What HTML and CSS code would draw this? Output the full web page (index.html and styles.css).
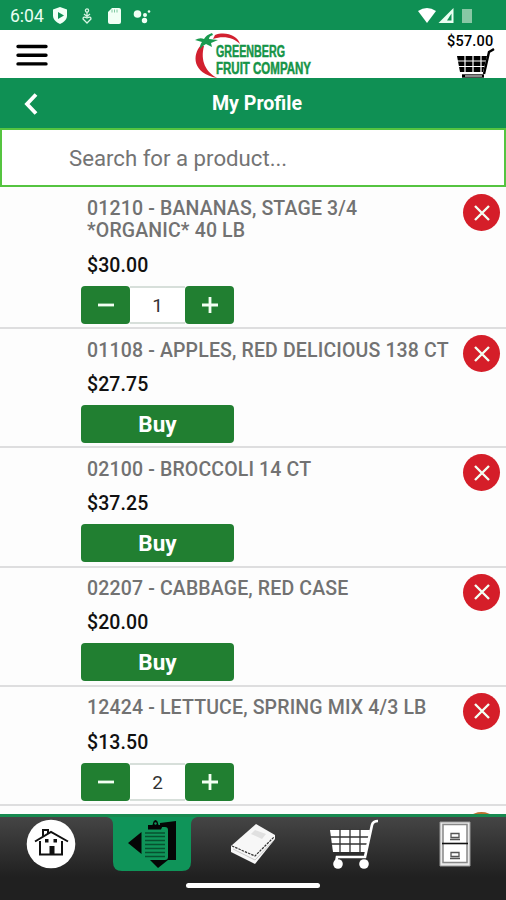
FILE: index.html
```
<!DOCTYPE html>
<html lang="en">
<head>
    <meta charset="UTF-8">
    <meta name="viewport" content="width=device-width, initial-scale=1.0">
    <title>My Profile</title>
    <link rel="stylesheet" href="styles.css">
</head>
<body>
    <!-- Status bar -->
    <div class="status">
        <span class="clock">6:04</span>
        <svg class="status-left" width="106" height="20" viewBox="0 0 106 20" fill="#f1fff5">
            <path d="M7 1l7 2.500v6c0 4-3 6.500-7 8.500-4-2-7-4.500-7-8.500v-6z"/>
            <path d="M5 6l6 3.500-6 3.500z" fill="#0f9054"/>
            <g fill="none" stroke="#d8f5e3" stroke-width="1.300">
                <circle cx="34" cy="4.500" r="1.600"/>
                <path d="M34 6v4M31 8l3 2.500 3-2.500M34 17l-4-4q0-3 4-1 4-2 4 1z"/>
            </g>
            <path d="M59 2h7q2 0 2 2v12q0 2-2 2H57q-2 0-2-2V6z"/>
            <path d="M59 3.500v3M61.500 3.500v3M64 3.500v3" stroke="#7fc7a0"/>
            <circle cx="84.500" cy="8" r="3.800"/>
            <circle cx="92" cy="9" r="2"/>
            <circle cx="91.500" cy="14.500" r="2.700"/>
            <circle cx="96" cy="5.500" r="1.300"/>
        </svg>
        <svg class="status-right" width="55" height="18" viewBox="0 0 55 18">
            <path d="M0 4q9-6 18 0l-9 12z" fill="#fff"/>
            <path d="M20.500 16L35.500 1v15z" fill="#eafff2"/>
            <path d="M29 13.500l4.500-7v7z" fill="#0f9054"/>
            <path d="M44 2h10v14H44z" fill="#88c8a5"/>
        </svg>
    </div>

    <!-- Header -->
    <header class="header">
        <svg class="menu" width="32" height="23" viewBox="0 0 32 23">
            <path d="M2 2.500h28M2 11.200h28M2 19.900h28" stroke="#000" stroke-width="3.400" stroke-linecap="round"/>
        </svg>
        <svg class="logo" width="120" height="48" viewBox="0 0 120 48">
            <path d="M11 14C2 24 2 42 27 47C16 41 10 30 14 15z" fill="#d2202f"/>
            <path d="M25 4C36 0 48 5 50 13C44 7 34 4 23 8z" fill="#d2202f"/>
            <path d="M5 9q5-3 9-1q2-4 8-6l1 2q-4 1-4 4l9 1-7 3 1 4-6-3q-4 2-6 5 0-5 2-7z" fill="#1a9a4f"/>
            <text x="26" y="25.500" textLength="69" lengthAdjust="spacingAndGlyphs">GREENBERG</text>
            <text x="26" y="42.500" textLength="95" lengthAdjust="spacingAndGlyphs">FRUIT COMPANY</text>
        </svg>
        <div class="cart">
            <span class="total">$57.00</span>
            <svg width="40" height="31" viewBox="0 0 40 31">
                <path d="M1 9h30l-4 16H4z" fill="#000"/>
                <path d="M1 14h29M2 19.500h27M9 8v17M17 8v17M25 8v17" stroke="#fff" stroke-width="1.200"/>
                <path d="M38 2l-5 3-5 22" fill="none" stroke="#000" stroke-width="2.400"/>
                <path d="M6 29h22" stroke="#000" stroke-width="3.400"/>
                <path d="M9 29h17" stroke="#999" stroke-width="1.800"/>
            </svg>
        </div>
    </header>

    <div class="title-bar">
        <svg class="back" width="14" height="22" viewBox="0 0 14 22">
            <path d="M12 1.500L3 11l9 9.500" fill="none" stroke="#fff" stroke-width="3.800"/>
        </svg>
        <h1>My Profile</h1>
    </div>

    <input class="search" type="text" placeholder="Search for a product...">

    <!-- Products -->
    <main class="list">
        <div class="item tall">
            <div class="name">01210 - BANANAS, STAGE 3/4 *ORGANIC* 40 LB</div>
            <div class="price">$30.00</div>
            <div class="qty">
                <button class="step"><svg width="16" height="16"><path d="M0 8h16"/></svg></button>
                <span class="count">1</span>
                <button class="step"><svg width="16" height="16"><path d="M0 8h16M8 0v16"/></svg></button>
            </div>
            <button class="remove"><svg width="16" height="16"><path d="M1 1l14 14M15 1L1 15"/></svg></button>
        </div>
        <div class="item">
            <div class="name">01108 - APPLES, RED DELICIOUS 138 CT</div>
            <div class="price">$27.75</div>
            <button class="buy">Buy</button>
            <button class="remove"><svg width="16" height="16"><path d="M1 1l14 14M15 1L1 15"/></svg></button>
        </div>
        <div class="item">
            <div class="name">02100 - BROCCOLI 14 CT</div>
            <div class="price">$37.25</div>
            <button class="buy">Buy</button>
            <button class="remove"><svg width="16" height="16"><path d="M1 1l14 14M15 1L1 15"/></svg></button>
        </div>
        <div class="item">
            <div class="name">02207 - CABBAGE, RED CASE</div>
            <div class="price">$20.00</div>
            <button class="buy">Buy</button>
            <button class="remove"><svg width="16" height="16"><path d="M1 1l14 14M15 1L1 15"/></svg></button>
        </div>
        <div class="item">
            <div class="name">12424 - LETTUCE, SPRING MIX 4/3 LB</div>
            <div class="price">$13.50</div>
            <div class="qty">
                <button class="step"><svg width="16" height="16"><path d="M0 8h16"/></svg></button>
                <span class="count">2</span>
                <button class="step"><svg width="16" height="16"><path d="M0 8h16M8 0v16"/></svg></button>
            </div>
            <button class="remove"><svg width="16" height="16"><path d="M1 1l14 14M15 1L1 15"/></svg></button>
        </div>
        <div class="item">
            <button class="remove pending"></button>
        </div>
    </main>

    <!-- Bottom navigation -->
    <nav class="nav">
        <div class="tabs">
            <a class="tab">
                <svg width="50" height="50" viewBox="0 0 50 50">
                    <circle cx="25" cy="25" r="24.300" fill="#fff"/>
                    <path d="M9 22.500L25 13l17 9.500M14 22v13.500h22V22M17 17v-6h5v3" fill="none" stroke="#111" stroke-width="2"/>
                    <path d="M19 20h3.500v3.500H19zM27.500 20H31v3.500h-3.500zM23.500 27h5v8h-5z" fill="#111"/>
                </svg>
            </a>
            <a class="tab active">
                <svg class="tab-bg" width="90" height="54" viewBox="0 0 90 54">
                    <path d="M0 0q6 1 6 8v37q0 9 9 9h60q9 0 9-9V8q0-7 6-8z" fill="#0f9459"/>
                </svg>
                <svg class="tab-icon" width="50" height="50" viewBox="0 0 50 50">
                    <path d="M1 24L14.500 13v22zM33 4l16-2v39h-8l-10 8-8-8h15q3 0 3-3V11q0-3-3-3h-5z" fill="#050505"/>
                    <path d="M18 14h20M18 17.500h20M18 21.500h20M18 25.500h20M18 29.500h20M18 33.500h20M18 37.500h20" stroke="#07512f" stroke-width="1.500"/>
                    <path d="M21 10.500V6h4.500l1-3.500q2-3 4 0l1 3.500H36l-2 4.500z" fill="#050505"/>
                    <circle cx="28.500" cy="4.500" r="1.200" fill="#0f9459"/>
                </svg>
            </a>
            <a class="tab">
                <svg width="46" height="42" viewBox="0 0 46 42">
                    <path d="M26 1l19 11v4L25 41 1 29v-6z" fill="#f7f7f7"/>
                    <path d="M2 23l23 10 19-19" fill="none" stroke="#333" stroke-width="1.200" stroke-dasharray="2.500 1"/>
                    <path d="M3 26l22 11 19-20" fill="none" stroke="#ccc"/>
                    <path d="M21 11l4-4 11 4-4 5z" fill="#e0e0e0"/>
                </svg>
            </a>
            <a class="tab">
                <svg width="50" height="50" viewBox="0 0 50 50">
                    <path d="M1 11h40l-4 22H4z" fill="#fff"/>
                    <path d="M1 18h40M2 25h38M11 10v23M21 10v23M31 10v23" stroke="#333" stroke-width="1.300"/>
                    <path d="M49 2q-5 0-6 4l-7 32H8l-1 6" fill="none" stroke="#fff" stroke-width="2.700"/>
                    <circle cx="9" cy="45" r="4.800" fill="#fff"/>
                    <circle cx="35" cy="45" r="4.800" fill="#fff"/>
                </svg>
            </a>
            <a class="tab">
                <svg width="32" height="46" viewBox="0 0 32 46">
                    <path d="M1 1h30v44H1z" fill="#e9e9e9" stroke="#999"/>
                    <path d="M4 3.500h24v38H4z" fill="#fff" stroke="#888" stroke-width="1.500"/>
                    <path d="M3 22.500h26" stroke="#111" stroke-width="1.600"/>
                    <path d="M12 12.500h8v4h-8zM11 18.500h10M12 31.500h8v4h-8zM11 37.500h10" fill="none" stroke="#555" stroke-width="1.300"/>
                </svg>
            </a>
        </div>
        <div class="home-bar"></div>
    </nav>
</body>
</html>
```
FILE: styles.css
```
* {
    box-sizing: border-box;
}

body {
    margin: 0;
    height: 900px;
    display: flex;
    flex-direction: column;
    overflow: hidden;
    font-family: Roboto, sans-serif;
    background-color: #fdfdfd;
}

button {
    border: none;
    padding: 0;
    font-family: inherit;
    cursor: pointer;
}

svg {
    display: block;
}

.status {
    height: 30px;
    flex: none;
    display: flex;
    align-items: center;
    padding: 1px 33px 0 10px;
    background-color: #0f9054;
}

.clock {
    width: 43px;
    font-size: 17.5px;
    color: #e9fff2;
}

.status-right {
    margin-left: auto;
}

.header {
    height: 48px;
    flex: none;
    display: flex;
    align-items: flex-start;
    background-color: #fff;
}

.menu {
    margin: 14px 0 0 16px;
}

.logo {
    margin: 1px 0 0 142px;
    overflow: visible;
    font-family: "Liberation Sans Narrow", "Liberation Sans", sans-serif;
    font-size: 16px;
    font-weight: bold;
    fill: #159447;
}

.logo text {
    stroke: #159447;
    stroke-width: 0.5px;
}

.cart {
    margin-left: auto;
    width: 59px;
    padding-top: 3px;
}

.cart svg {
    margin: -3px 0 0 9px;
}

.total {
    display: block;
    font-size: 14.5px;
    line-height: 17px;
    font-weight: 500;
    letter-spacing: 0.2px;
}

.title-bar {
    height: 51px;
    flex: none;
    display: flex;
    align-items: center;
    padding: 0 30px 0 24px;
    background-color: #0f9054;
}

.title-bar h1 {
    flex: 1;
    margin: 0;
    text-align: center;
    color: #fff;
    font-size: 19.6px;
    font-weight: 700;
}

.search {
    height: 59px;
    flex: none;
    margin-top: -1px;
    padding: 1px 0 0 67px;
    border: 2px solid #55c440;
    border-radius: 0;
    background-color: #fff;
    font-family: inherit;
    font-size: 22.2px;
    font-weight: 400;
}

.search::placeholder {
    color: #747474;
}

.list {
    flex: 1;
    min-height: 0;
    overflow: hidden;
}

.item {
    position: relative;
    height: 119.2px;
    padding: 10.7px 0 0 81px;
    border-bottom: 2px solid #dededf;
}

.item.tall {
    height: 142.2px;
}

.name {
    width: 375px;
    padding-left: 6px;
    font-size: 19.5px;
    line-height: 22.7px;
    font-weight: 500;
    letter-spacing: 0.15px;
    color: #727272;
}

.tall .name {
    width: 320px;
}

.price {
    padding-left: 6px;
    margin-top: 10.5px;
    font-size: 19.5px;
    line-height: 23px;
    font-weight: 500;
    letter-spacing: 0.1px;
    color: #111;
}

.qty {
    display: flex;
    width: 153px;
    height: 38px;
    margin-top: 9px;
}

.step {
    width: 49px;
    display: flex;
    align-items: center;
    justify-content: center;
    border-radius: 4px;
    background-color: #217f31;
}

.step path,
.remove path {
    fill: none;
    stroke: #f3fff3;
    stroke-width: 2.8;
}

.count {
    flex: 1;
    border-top: 2px solid #d7dfda;
    border-bottom: 2px solid #d7dfda;
    background-color: #fff;
    text-align: center;
    font-size: 19px;
    line-height: 36px;
    color: #333;
}

.buy {
    display: block;
    width: 153px;
    height: 38px;
    margin-top: 9px;
    border-radius: 4px;
    background-color: #217f31;
    color: #fff;
    font-size: 22.5px;
    font-weight: 700;
}

/* sits over the right edge of each product */
.remove {
    position: absolute;
    top: 6px;
    right: 6px;
    width: 37px;
    height: 37px;
    display: flex;
    align-items: center;
    justify-content: center;
    border-radius: 50%;
    background-color: #d51e29;
}

.tall .remove {
    top: 7px;
}

.remove path {
    stroke-width: 2.4;
}

.remove.pending {
    background-color: #bd702f;
}

.nav {
    height: 86px;
    flex: none;
    border-top: 3px solid #178a50;
    background: linear-gradient(#454545, #202020 60px);
}

.tabs {
    display: grid;
    grid-template-columns: repeat(5, 1fr);
    height: 54px;
}

.tab {
    position: relative;
    display: flex;
    align-items: center;
    justify-content: center;
}

.tab-bg {
    position: absolute;
    top: 0;
    left: 6px;
}

.tab-icon {
    position: relative;
}

.home-bar {
    width: 134px;
    height: 5px;
    margin: 12px auto 0;
    border-radius: 3px;
    background-color: #fff;
}
```
